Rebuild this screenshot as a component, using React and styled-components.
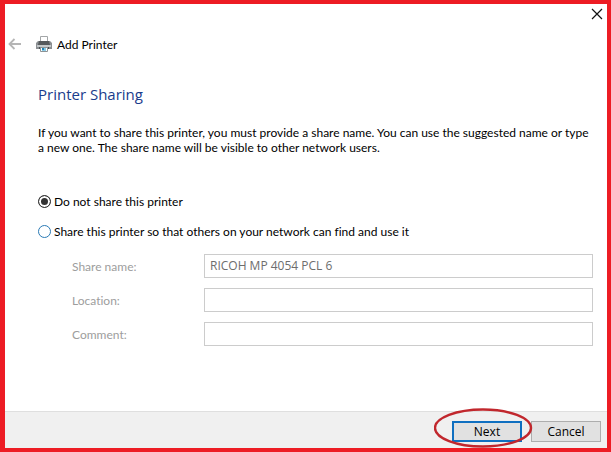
import React from 'react';
import styled, { createGlobalStyle } from 'styled-components';

const GlobalStyle = createGlobalStyle`
  * {
    box-sizing: border-box;
  }
  body {
    margin: 0;
    color: #000;
    font-family: Lato, "Open Sans", sans-serif;
    font-size: 12px;
    line-height: 15px;
    font-variant-ligatures: none;
  }
  button, input {
    font: inherit;
    margin: 0;
  }
`

const Wizard = styled.main`
  display: flex;
  flex-direction: column;
  min-height: 100vh;
  border: 4px solid #ed1c24;
  border-left-width: 5px;
  background-color: #fff;
`

const TitleBar = styled.div`
  display: flex;
  justify-content: flex-end;
  height: 30px;
`

const IconButton = styled.button`
  display: flex;
  align-items: center;
  justify-content: center;
  width: 20px;
  height: 20px;
  padding: 0;
  border: 0;
  background: transparent;
`

const Header = styled.header`
  display: flex;
  align-items: center;
  height: 20px;
`

const PrinterIcon = styled.svg`
  margin: 0 5px 0 11px;
`

const Title = styled.h1`
  margin: 0;
  font-size: 12px;
  font-weight: 400;
`

const Content = styled.form`
  flex-grow: 1;
  padding: 29px 14px 20px 33px;
`

const Heading = styled.h2`
  margin: 0 0 20px;
  color: #1a3c8c;
  font-family: "Open Sans", sans-serif;
  font-size: 15px;
  line-height: 22px;
  font-weight: 400;
`

const Intro = styled.p`
  margin: 0 0 39px;
`

const Option = styled.label`
  display: flex;
  align-items: center;
  min-height: 15px;
  margin-bottom: 15px;
`

const Radio = styled.input`
  appearance: none;
  flex-shrink: 0;
  width: 13px;
  height: 13px;
  margin: 0 3px 0 0;
  border: 1px solid ${props => (props.checked ? '#333' : '#2a7ab5')};
  border-radius: 50%;
  background-color: ${props => (props.checked ? '#333' : '#fff')};
  box-shadow: inset 0 0 0 2px #fff;
`

const Fields = styled.div`
  display: grid;
  grid-template-columns: 132px 1fr;
  align-items: center;
  row-gap: 10px;
  padding-left: 34px;
`

const FieldLabel = styled.label`
  color: #9d9d9d;
`

const TextBox = styled.input`
  width: 100%;
  height: 24px;
  padding: 0 5px 2px;
  border: 1px solid #ccc;
  border-radius: 0;
  background-color: #fff;
  color: #6d6d6d;
  font-family: "Open Sans", sans-serif;
`

const Footer = styled.footer`
  display: flex;
  justify-content: flex-end;
  gap: 9px;
  padding: 9px 6px 6px;
  border-top: 1px solid #dfdfdf;
  background-color: #f0f0f0;
`

const Button = styled.button`
  width: 70px;
  height: 21px;
  padding: 0;
  border: ${props => (props.$primary ? '2px solid #0f6fc0' : '1px solid #adadad')};
  background-color: #e1e1e1;
  color: #000;
  font-family: "Open Sans", sans-serif;
  line-height: 15px;
`

const Marked = styled.div`
  display: flex;
  position: relative;
`

const Ring = styled.svg`
  position: absolute;
  top: -13px;
  left: -18px;
  pointer-events: none;
`

const fields = [
  { id: 'share-name', label: 'Share name:', value: 'RICOH MP 4054 PCL 6' },
  { id: 'location', label: 'Location:', value: '' },
  { id: 'comment', label: 'Comment:', value: '' },
];

class App extends React.Component {
  state = { shared: false }

  setShared = shared => this.setState({ shared })

  render() {
    const { shared } = this.state;
    return (
      <Wizard>
        <GlobalStyle />
        <TitleBar>
          <IconButton type="button" aria-label="Close">
            <svg width="12" height="12" viewBox="0 0 12 12" fill="none" stroke="#111" strokeWidth="1.2">
              <path d="M1 1l10 10M11 1L1 11" />
            </svg>
          </IconButton>
        </TitleBar>
        <Header>
          <IconButton type="button" aria-label="Back" disabled>
            <svg width="14" height="12" viewBox="0 0 14 12" fill="none" stroke="#b5b5b5" strokeWidth="1.8">
              <path d="M13 6H1.500M6.500 1L1.500 6l5 5" />
            </svg>
          </IconButton>
          <PrinterIcon width="16" height="16" viewBox="0 0 16 16" aria-hidden="true">
            <path d="M4.500 6V.5h7V6" fill="#fff" stroke="#a3a6a8" />
            <path d="M2 5h12l2 2v6H0V7z" fill="#8b8f92" />
            <path d="M3 5h10l1 4H2z" fill="#55595c" />
            <path d="M1 9h14v2H1z" fill="#c4c8ca" />
            <path d="M3 11h10v2H3z" fill="#4a4e51" />
            <path d="M4.500 11.500h7v4h-7z" fill="#fff" stroke="#8d9295" />
            <path d="M6 12h4v3H6z" fill="#8ccbe6" />
            <path d="M6 12h2v2H6z" fill="#1f86b8" />
          </PrinterIcon>
          <Title>Add Printer</Title>
        </Header>
        <Content>
          <Heading>Printer Sharing</Heading>
          <Intro>
            If you want to share this printer, you must provide a share name. You can use the suggested name or type
            <br />
            a new one. The share name will be visible to other network users.
          </Intro>
          <Option>
            <Radio type="radio" name="sharing" checked={!shared} onChange={() => this.setShared(false)} />
            Do not share this printer
          </Option>
          <Option>
            <Radio type="radio" name="sharing" checked={shared} onChange={() => this.setShared(true)} />
            Share this printer so that others on your network can find and use it
          </Option>
          <Fields>
            {fields.map(({ id, label, value }) => (
              <React.Fragment key={id}>
                <FieldLabel htmlFor={id}>{label}</FieldLabel>
                <TextBox id={id} type="text" defaultValue={value} disabled={!shared} />
              </React.Fragment>
            ))}
          </Fields>
        </Content>
        <Footer>
          <Marked>
            <Button type="button" $primary>Next</Button>
            <Ring width="100" height="42" viewBox="0 0 100 42" fill="none" aria-hidden="true">
              <ellipse cx="49" cy="20" rx="48" ry="18.500" stroke="#c1272d" strokeWidth="2.4" />
            </Ring>
          </Marked>
          <Button type="button">Cancel</Button>
        </Footer>
      </Wizard>
    );
  }
}

export default App;
